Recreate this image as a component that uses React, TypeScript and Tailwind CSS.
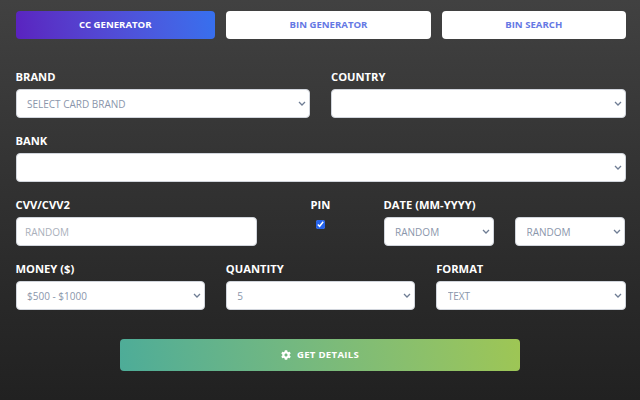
import { FaCog } from "react-icons/fa";

const labelClass = "block h-[13px] mb-[6px] text-[11.2px] leading-[13px] font-bold text-white";

const tabClass =
  "h-[28px] rounded-[4px] bg-white text-[9.6px] font-bold text-[#6578e4] flex items-center justify-center";

function Select({ value }: { value?: string }) {
  return (
    <div className="relative w-full">
      <select
        className="block h-[29px] w-full appearance-none rounded-[4px] border border-gray-300 bg-white pl-[10.5px] text-[10px] leading-none text-[#8a96ab] outline-none"
        defaultValue={value ?? ""}
      >
        <option value={value ?? ""}>{value ?? ""}</option>
      </select>
      <svg
        viewBox="0 0 8 5"
        className="pointer-events-none absolute right-[4px] top-[12px] h-[5px] w-[8px] fill-none stroke-[#6f7d94] stroke-[1.3]"
      >
        <path d="M1 1l3 3 3-3" />
      </svg>
    </div>
  );
}

function Field({ label, value, className }: { label: string; value?: string; className: string }) {
  return (
    <div className={className}>
      <label className={labelClass}>{label}</label>
      <Select value={value} />
    </div>
  );
}

export default function App() {
  return (
    <div className="h-[400px] w-[640px] overflow-hidden bg-gradient-to-b from-[#414141] to-[#212121] pl-[15.5px] pr-[14.5px] pt-[11px] font-['Open_Sans',sans-serif]">
      <div className="flex gap-[11px]">
        <button
          type="button"
          className="h-[28px] w-[199.5px] rounded-[4px] bg-linear-80 from-[#5a22bf] to-[#3670ee] text-[9.6px] font-bold text-white flex items-center justify-center"
        >
          CC GENERATOR
        </button>
        <button type="button" className={`${tabClass} w-[205px]`}>
          BIN GENERATOR
        </button>
        <button type="button" className={`${tabClass} flex-1`}>
          BIN SEARCH
        </button>
      </div>

      <div className="mt-[31px] grid grid-cols-12 gap-x-[21px] gap-y-[16px]">
        <Field label="BRAND" value="SELECT CARD BRAND" className="col-span-6" />
        <Field label="COUNTRY" className="col-span-6" />
        <Field label="BANK" className="col-span-12" />

        <div className="col-span-5">
          <label className={labelClass}>CVV/CVV2</label>
          <input
            type="text"
            placeholder="RANDOM"
            className="block h-[29px] w-full rounded-[4px] border border-gray-300 bg-white px-[8.5px] text-[10px] outline-none placeholder:text-[#aab0bb]"
          />
        </div>
        <div className="col-span-2 flex flex-col items-center">
          <label className={labelClass}>PIN</label>
          <input type="checkbox" defaultChecked className="mt-[3px] h-[9px] w-[9px] accent-[#2563eb]" />
        </div>
        <div className="col-span-5">
          <label className={labelClass}>DATE (MM-YYYY)</label>
          <div className="flex gap-[21px]">
            <Select value="RANDOM" />
            <Select value="RANDOM" />
          </div>
        </div>

        <Field label="MONEY ($)" value="$500 - $1000" className="col-span-4" />
        <Field label="QUANTITY" value="5" className="col-span-4" />
        <Field label="FORMAT" value="TEXT" className="col-span-4" />
      </div>

      <div className="mt-[29px] mr-[1px] flex justify-center">
        <button
          type="button"
          className="flex h-[32px] w-[400px] items-center justify-center gap-[6px] rounded-[4px] bg-linear-80 from-[#4dac98] to-[#9ec654] text-[9.6px] font-bold tracking-[0.3px] text-white"
        >
          <FaCog className="h-[10px] w-[10px]" />
          GET DETAILS
        </button>
      </div>
    </div>
  );
}
